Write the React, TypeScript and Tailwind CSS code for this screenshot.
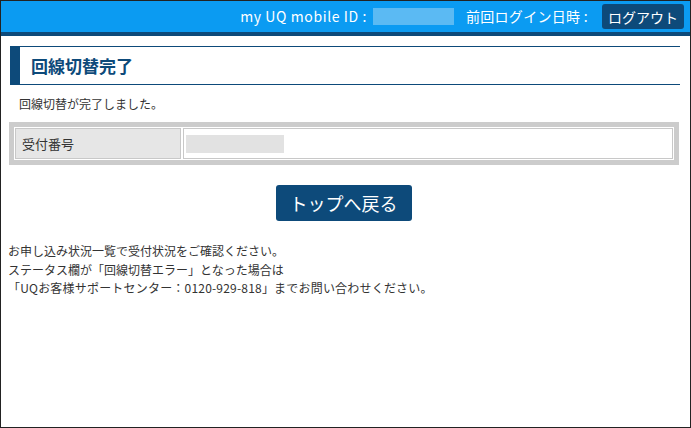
export default function App() {
  return (
    <div
      className="w-[691px] h-[428px] border border-[#222] bg-white overflow-hidden text-[#333]"
      style={{ fontFamily: '"Noto Sans CJK JP", "Noto Sans", sans-serif' }}
    >
      {/* ヘッダー */}
      <div className="h-[31px] bg-[#0b9bf2] flex items-center justify-end pr-[6px] text-white text-[14px]">
        <span className="tracking-[0.6px]">my UQ mobile ID :</span>
        <span className="ml-[6px] w-[81px] h-[17px] bg-[#5bbaf3]" />
        <span className="ml-[12px] tracking-[0.3px]">前回ログイン日時 :</span>
        <button className="ml-[14px] h-[25px] px-[6px] rounded-[3px] bg-[#0d4a7a] text-white text-[14px] leading-none">
          ログアウト
        </button>
      </div>
      <div className="h-[4px] bg-[#0d4a7a]" />

      <div className="px-[8px]">
        {/* 見出し */}
        <div className="mt-[10px] ml-[1px] mr-[2px] h-[39px] flex items-stretch">
          <div className="w-[10px] bg-[#0d4a7a]" />
          <div className="flex-1 border-y border-[#0d4a7a] flex items-center pl-[11px]">
            <h1 className="text-[17px] font-bold text-[#0d4a7a] leading-none">
              回線切替完了
            </h1>
          </div>
        </div>

        <p className="mt-[10px] ml-[10px] text-[12px] leading-[18px]">
          回線切替が完了しました。
        </p>

        {/* 受付番号 */}
        <div className="mt-[9px] mr-[3px] border-[5px] border-[#cccccc] flex bg-white p-px">
          <div className="w-[166px] h-[31px] bg-[#e6e6e6] border border-[#c8c8c8] flex items-center pl-[6px] text-[13px]">
            受付番号
          </div>
          <div className="flex-1 h-[31px] ml-[2px] border border-[#c8c8c8] flex items-center pl-[2px]">
            <span className="w-[98px] h-[18px] bg-[#e2e2e2]" />
          </div>
        </div>

        <div className="mt-[20px] flex justify-center pr-[4px]">
          <button className="w-[136px] h-[36px] rounded-[3px] bg-[#0d4a7a] text-white text-[18px] leading-none">
            トップへ戻る
          </button>
        </div>

        <div className="mt-[21px] -ml-[1px] text-[12px] leading-[18.5px]">
          <p>お申し込み状況一覧で受付状況をご確認ください。</p>
          <p>ステータス欄が「回線切替エラー」となった場合は</p>
          <p className="tracking-[0.2px]">「UQお客様サポートセンター：0120-929-818」までお問い合わせください。</p>
        </div>
      </div>
    </div>
  );
}
